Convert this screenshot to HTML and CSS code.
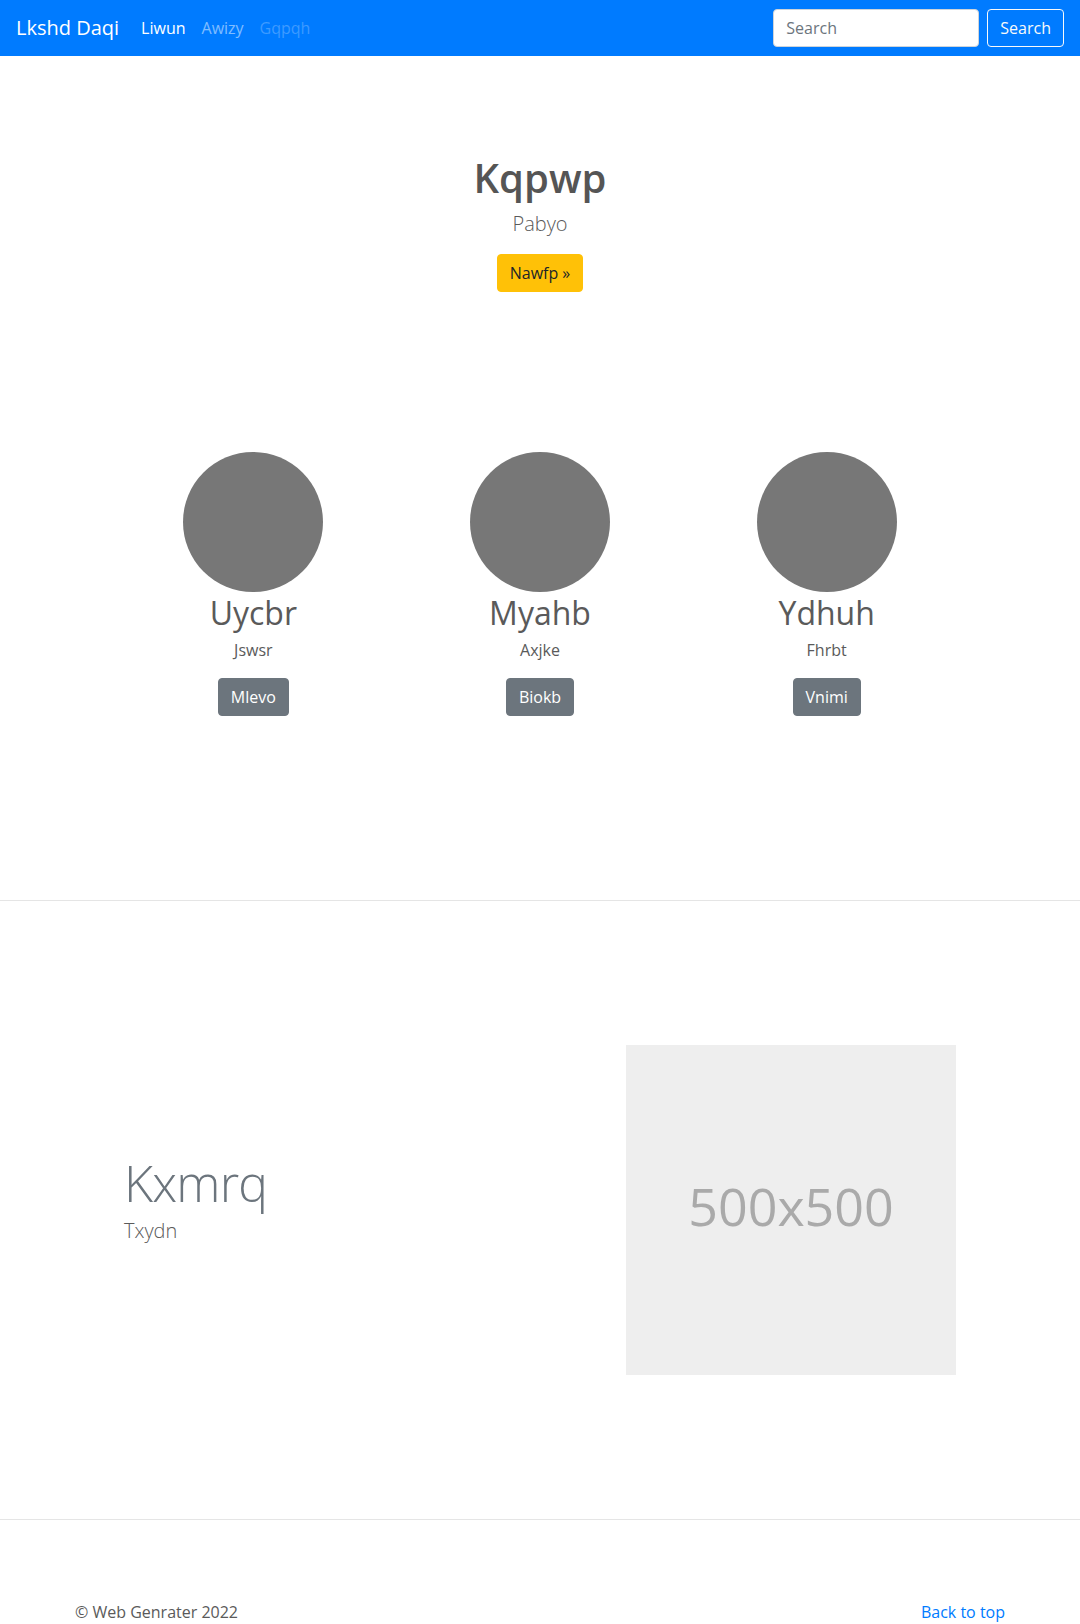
FILE: index.html
```html
<!DOCTYPE html>
<html lang="en">
<head>
<meta charset="utf-8">
<title>Lkshd Daqi</title>
<link rel="stylesheet" href="styles.css">
</head>
<body>
<nav class="navbar">
  <a class="brand" href="#">Lkshd Daqi</a>
  <ul class="nav">
    <li><a class="nav-link active" href="#">Liwun</a></li>
    <li><a class="nav-link" href="#">Awizy</a></li>
    <li><a class="nav-link disabled" href="#">Gqpqh</a></li>
  </ul>
  <form class="search">
    <input class="search-input" type="text" placeholder="Search">
    <button class="btn btn-outline-light" type="button">Search</button>
  </form>
</nav>

<section class="hero">
  <h1 class="hero-title">Kqpwp</h1>
  <p class="lead hero-lead">Pabyo</p>
  <a class="btn btn-warning" href="#">Nawfp »</a>
</section>

<section class="marketing">
  <div class="col">
    <div class="avatar"></div>
    <h2 class="col-title">Uycbr</h2>
    <p class="col-text">Jswsr</p>
    <a class="btn btn-secondary" href="#">Mlevo</a>
  </div>
  <div class="col">
    <div class="avatar"></div>
    <h2 class="col-title">Myahb</h2>
    <p class="col-text">Axjke</p>
    <a class="btn btn-secondary" href="#">Biokb</a>
  </div>
  <div class="col">
    <div class="avatar"></div>
    <h2 class="col-title">Ydhuh</h2>
    <p class="col-text">Fhrbt</p>
    <a class="btn btn-secondary" href="#">Vnimi</a>
  </div>
</section>

<hr class="divider">

<section class="featurette">
  <div class="feat-text">
    <h2 class="feat-heading">Kxmrq</h2>
    <p class="lead">Txydn</p>
  </div>
  <div class="placeholder"><span class="placeholder-text">500x500</span></div>
</section>

<hr class="divider">

<footer class="footer">
  <p class="copy">© Web Genrater 2022</p>
  <a class="back" href="#">Back to top</a>
</footer>
</body>
</html>
```

FILE: styles.css
```css
* { box-sizing: border-box; }

body {
  margin: 0;
  font-family: "Open Sans", "Noto Sans", "Liberation Sans", sans-serif;
  font-size: 16px;
  line-height: 1.5;
  color: #5a5a5a;
  background: #fff;
}

a { text-decoration: none; }

.navbar {
  display: flex;
  align-items: center;
  height: 56px;
  padding: 8px 16px;
  background: #007bff;
}

.brand {
  font-size: 20px;
  line-height: 30px;
  padding: 5px 0;
  margin-right: 14px;
  color: #fff;
}

.nav {
  display: flex;
  list-style: none;
  margin: 0;
  padding: 0;
}

.nav-link {
  display: block;
  padding: 8px;
  color: rgba(255,255,255,.5);
}
.nav-link.active { color: #fff; }
.nav-link.disabled { color: rgba(255,255,255,.25); }

.search {
  display: flex;
  margin: 0 0 0 auto;
}

.search-input {
  width: 206px;
  height: 38px;
  padding: 6px 12px;
  margin-right: 8px;
  font: inherit;
  color: #495057;
  border: 1px solid #ced4da;
  border-radius: 4px;
  background: #fff;
}
.search-input::placeholder { color: #6c757d; }

.btn {
  display: inline-block;
  height: 38px;
  padding: 6px 12px;
  font: inherit;
  font-size: 16px;
  line-height: 24px;
  border: 1px solid transparent;
  border-radius: 4px;
  cursor: pointer;
}

.btn-outline-light {
  color: #f8f9fa;
  background: transparent;
  border-color: #f8f9fa;
}

.btn-warning {
  color: #212529;
  background: #ffc107;
  border-color: #ffc107;
}

.btn-secondary {
  color: #fff;
  background: #6c757d;
  border-color: #6c757d;
}

.hero {
  padding-top: 98px;
  text-align: center;
}

.hero-title {
  margin: 0 0 7px;
  font-size: 40px;
  line-height: 1.2;
  font-weight: 600;
  color: #555;
}

.lead {
  margin: 0 0 16px;
  font-size: 20px;
  line-height: 1.5;
  font-weight: 300;
}

.hero-lead { margin-bottom: 15px; }

.marketing {
  display: grid;
  grid-template-columns: repeat(3, 1fr);
  width: 860px;
  margin: 160px auto 0;
}

.col {
  display: flex;
  flex-direction: column;
  align-items: center;
  text-align: center;
}

.avatar {
  width: 140px;
  height: 140px;
  border-radius: 50%;
  background: #777;
}

.col-title {
  margin: 2px 0 6px;
  font-size: 32px;
  line-height: 1.2;
  font-weight: 400;
}

.col-text {
  margin: 0 0 16px;
}

.divider {
  margin: 0;
  border: 0;
  border-top: 1px solid rgba(0,0,0,.1);
}

.marketing + .divider { margin-top: 184px; }

.featurette {
  display: grid;
  grid-template-columns: 1fr 330px;
  align-items: center;
  margin: 0 124px;
  padding: 144px 0;
}

.feat-heading {
  margin: 0 0 8px;
  font-size: 50px;
  line-height: 1;
  font-weight: 300;
  letter-spacing: -0.8px;
  color: #6c757d;
}

.placeholder {
  display: flex;
  align-items: center;
  justify-content: center;
  width: 330px;
  height: 330px;
  background: #eee;
}

.placeholder-text {
  font-size: 52px;
  line-height: 1.2;
  padding-bottom: 8px;
  color: #aaa;
}

.footer {
  display: flex;
  justify-content: space-between;
  width: 930px;
  margin: 0 auto;
  padding-top: 80px;
}

.copy { margin: 0; }

.back { color: #007bff; }
```
